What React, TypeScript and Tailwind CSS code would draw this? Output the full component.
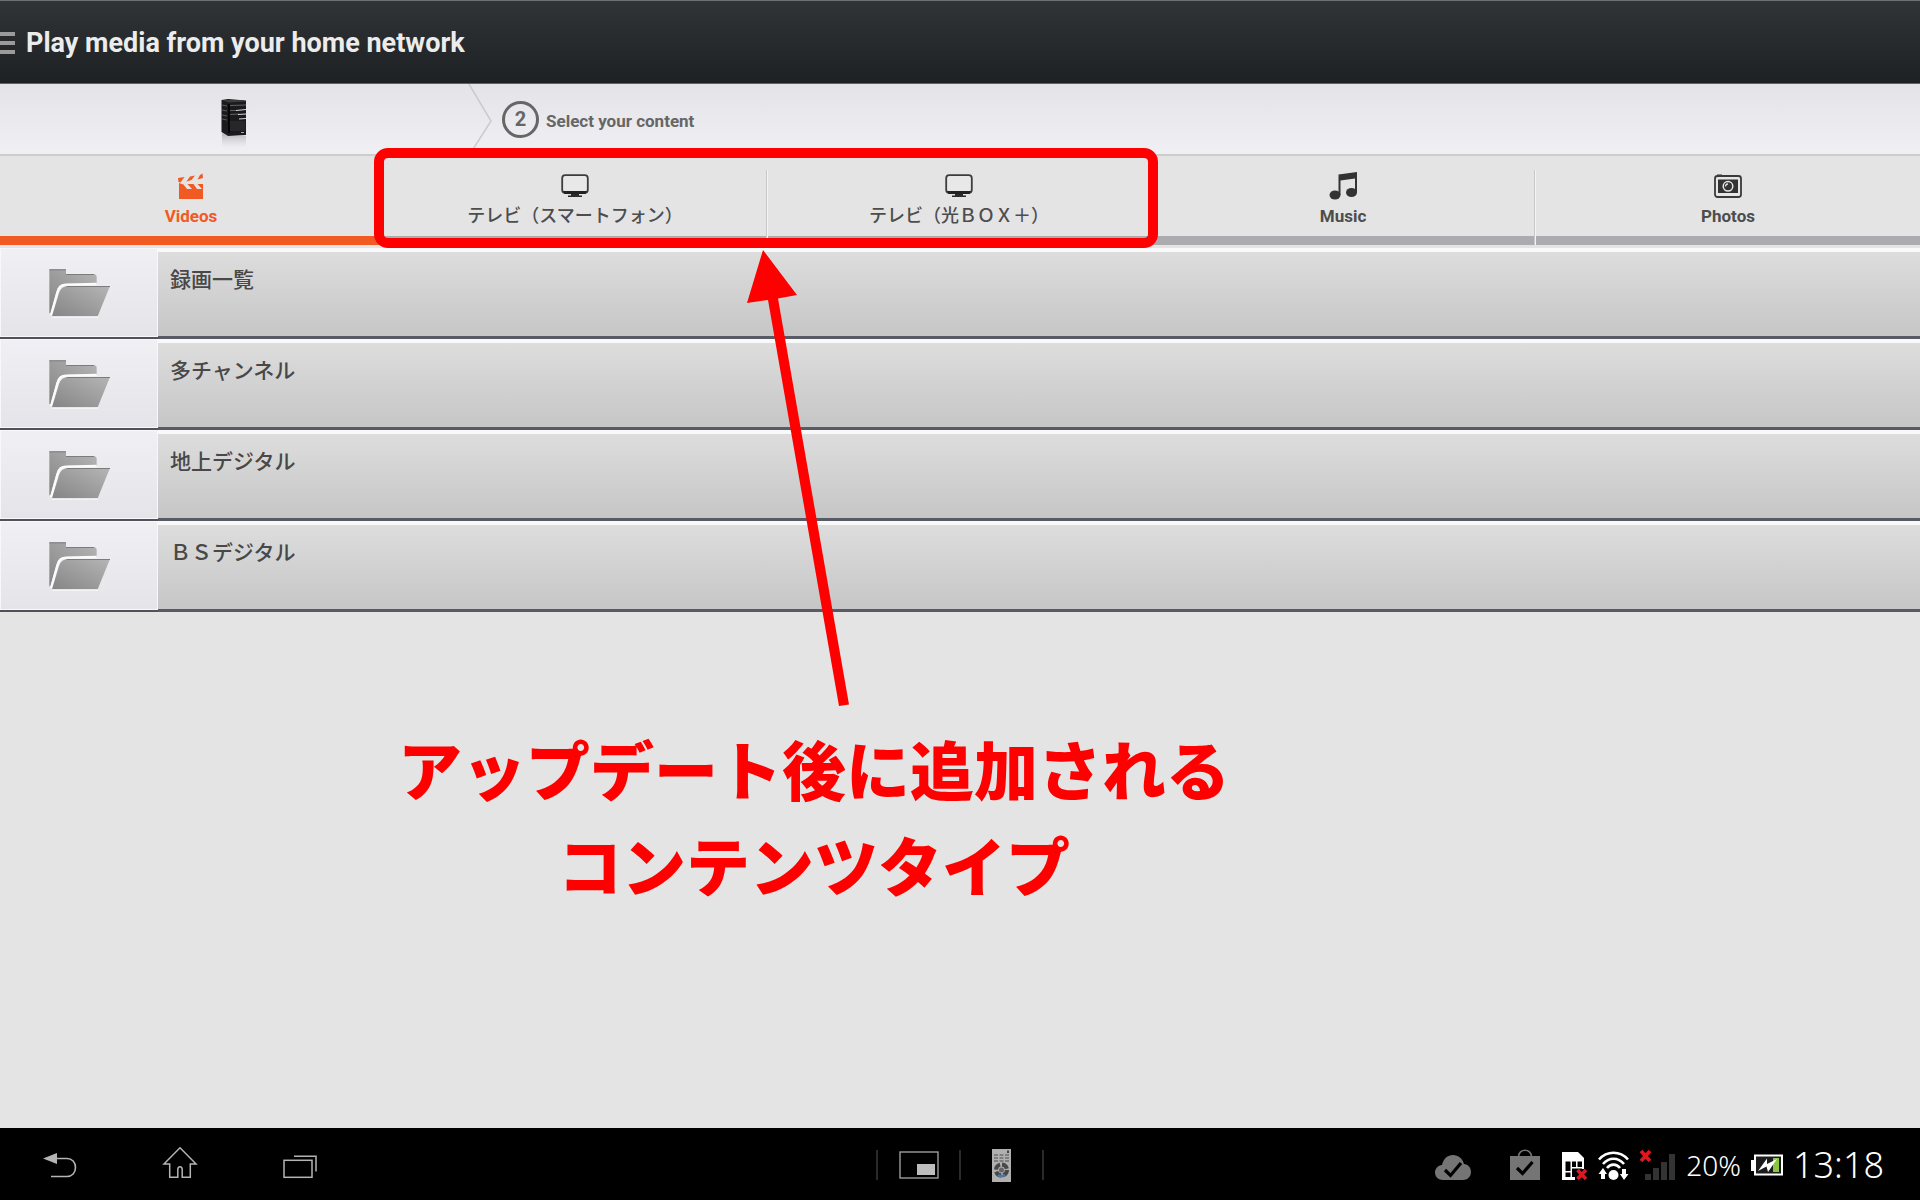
import React, { useState } from "react";

const contentTabs = [
  { id: "videos", label: "Videos", icon: <VideosIcon />, latin: true },
  { id: "tv-phone", label: "テレビ（スマートフォン）", icon: <TvIcon />, latin: false },
  { id: "tv-box", label: "テレビ（光ＢＯＸ＋）", icon: <TvIcon />, latin: false },
  { id: "music", label: "Music", icon: <MusicIcon />, latin: true },
  { id: "photos", label: "Photos", icon: <PhotosIcon />, latin: true },
];

const folders = ["録画一覧", "多チャンネル", "地上デジタル", "ＢＳデジタル"];

const App: React.FC = () => {
  return (
    <div className="relative flex min-h-screen flex-col bg-[#e4e4e4] font-['Roboto','Noto_Sans_CJK_JP',sans-serif]">
      <Header />
      <Steps />
      <ContentTabs />
      <FolderList />
      <SystemBar />
      <Callout />
    </div>
  );
};
export default App;

const Header: React.FC = () => {
  return (
    <header className="flex h-[84px] items-center gap-[11px] border-t border-b border-t-[#6b7072] border-b-[#5d6163] bg-linear-to-b from-[#303437] to-[#1d2123] pt-[2px]">
      <button aria-label="Menu" className="flex w-[15px] flex-col gap-[5px]">
        <span className="h-1 bg-[#9b9b9b]" />
        <span className="h-1 bg-[#9b9b9b]" />
        <span className="h-1 bg-[#9b9b9b]" />
      </button>
      <h1 className="text-[27px] leading-8 font-bold text-[#ececec]">
        Play media from your home network
      </h1>
    </header>
  );
};

const Steps: React.FC = () => {
  return (
    <div className="flex h-[72px] items-stretch border-b-2 border-[#cdcdd0] bg-linear-to-b from-[#e3e3e8] to-[#f0f0f4]">
      <button aria-label="Media server" className="flex w-[468px] items-center justify-center pt-[10px]">
        <ServerIcon />
      </button>
      <svg className="h-full w-[26px]" viewBox="0 0 26 70" fill="none">
        <path d="M1 0L23 37L2 70" stroke="#cbcbcf" strokeWidth="1.5" />
      </svg>
      <div className="flex items-center gap-[7px] pl-2 text-[#666]">
        <span className="flex h-[37px] w-[37px] items-center justify-center rounded-full border-[3px] border-[#666] text-xl font-bold">
          2
        </span>
        <span className="pt-[3px] text-[17px] leading-6 font-bold">Select your content</span>
      </div>
    </div>
  );
};

const ContentTabs: React.FC = () => {
  const [active, setActive] = useState<string>("videos");
  return (
    <nav className="grid grid-cols-5 pb-[3px]">
      {contentTabs.map((tab, i) => (
        <div key={tab.id} className="flex">
          <button
            onClick={() => setActive(tab.id)}
            className={`flex flex-1 flex-col items-center border-b-[9px] pt-4 pb-2 ${
              active === tab.id
                ? "border-[#f15a22] text-[#f15a22]"
                : "border-[#acacb0] text-[#4d4d4d]"
            }`}
          >
            <span className="flex h-7 items-center">{tab.icon}</span>
            <span
              className={`mt-1 leading-6 ${
                tab.latin ? "text-[17px] font-bold" : "text-lg leading-6 font-medium"
              }`}
            >
              {tab.label}
            </span>
          </button>
          {i < contentTabs.length - 1 && (
            <span className="mt-[14px] w-[2px] border-l border-[#c8c8c8] bg-[#f4f4f4]" />
          )}
        </div>
      ))}
    </nav>
  );
};

const FolderList: React.FC = () => {
  return (
    <main className="flex-1">
      <ul>
        {folders.map((name) => (
          <li key={name}>
            <button className="flex h-[91px] w-full text-left">
              <span className="h-full w-[158px] border-b-2 border-[#50525b] bg-[#f7f7fa]">
                <span className="flex h-full w-full items-center justify-center border border-[#f8f8fb] bg-linear-to-b from-[#f0f0f4] to-[#e4e4e9] pl-[2px]">
                  <FolderIcon />
                </span>
              </span>
              <span className="h-full flex-1 border-t-4 border-b-[3px] border-t-[#f9f9f9] border-b-[#585b66] bg-linear-to-b from-[#dddddd] to-[#c6c6c6] px-3 pt-3 text-[21px] leading-8 font-medium text-[#484848]">
                {name}
              </span>
            </button>
          </li>
        ))}
      </ul>
    </main>
  );
};

const SystemBar: React.FC = () => {
  return (
    <footer className="grid h-[72px] grid-cols-[1fr_auto_1fr] items-center bg-black pt-[2px] font-['Noto_Sans',sans-serif] text-white">
      <div className="flex">
        <button aria-label="Back" className="flex w-[120px] justify-center">
          <svg width="36" height="36" viewBox="0 0 36 36" fill="none">
            <path d="M14 11.5H25C30 11.5 33.5 15 33.5 20.5S30 29.5 25 29.5H9" stroke="#b4b4b4" strokeWidth="1.6" />
            <path d="M1 11.5L15 6V17Z" fill="#b4b4b4" />
          </svg>
        </button>
        <button aria-label="Home" className="flex w-[120px] justify-center">
          <svg width="36" height="36" viewBox="0 0 36 36" fill="none">
            <path
              d="M18 0.8L34 17H28.3V30.3H20.2V22.5C20.2 18.8 15.8 18.8 15.8 22.5V30.3H7.7V17H2Z"
              stroke="#b4b4b4"
              strokeWidth="1.5"
            />
          </svg>
        </button>
        <button aria-label="Recent apps" className="flex w-[120px] justify-center">
          <svg width="36" height="36" viewBox="0 0 36 36" fill="none" stroke="#b4b4b4" strokeWidth="1.5">
            <rect x="2" y="13.3" width="28" height="17" />
            <path d="M12 9.2H34V24.5" />
          </svg>
        </button>
      </div>

      <div className="flex items-center">
        <span className="h-[30px] w-[2px] bg-[#2a2a2a]" />
        <button aria-label="Small apps" className="flex w-[81px] justify-center">
          <svg width="40" height="28" viewBox="0 0 40 28">
            <rect x="1" y="1" width="38" height="26" fill="none" stroke="#a8a8a8" strokeWidth="1.3" />
            <rect x="18" y="13" width="18" height="11" fill="#bdbdbd" />
          </svg>
        </button>
        <span className="h-[30px] w-[2px] bg-[#2a2a2a]" />
        <button aria-label="Remote" className="flex w-[81px] justify-center">
          <RemoteIcon />
        </button>
        <span className="h-[30px] w-[2px] bg-[#2a2a2a]" />
      </div>

      <div className="flex items-center justify-end gap-[10px] pr-9">
        <div className="mr-3 flex items-center gap-[39px]">
          <svg width="36" height="32" viewBox="0 0 36 32">
            <path
              d="M8 31C3.5 31 0 28 0 23.5C0 19.5 3 16.5 7 16C8.5 9.5 12.5 6 18 6C23.5 6 27.5 9.5 29 15C33 15.5 36 18.5 36 23C36 27.5 32.5 31 28 31Z"
              fill="#757575"
            />
            <path d="M10 21L15.5 26.5L26 14" fill="none" stroke="#000" strokeWidth="3.2" />
          </svg>
          <svg width="30" height="32" viewBox="0 0 30 32">
            <path d="M8.5 8C8.5 -1 21.5 -1 21.5 8" fill="none" stroke="#757575" strokeWidth="1.6" />
            <rect y="7" width="30" height="24" fill="#757575" />
            <path d="M7 19L12.5 24.5L22.5 13" fill="none" stroke="#000" strokeWidth="3.2" />
          </svg>
        </div>
        <svg width="26" height="32" viewBox="0 0 26 32">
          <path d="M0 3H16L22 9V31H0Z" fill="#fff" />
          <path
            d="M3.5 12.5H8.5V22H3.5ZM10 12.5H14V18H10ZM15.5 12.5H20V18H15.5ZM10 19.5H20V28H10ZM3.5 23.5H8.5V28H3.5Z"
            fill="#000"
          />
          <path d="M13 20H23V31H13Z" fill="#000" />
          <path d="M15.5 21L24 30M24 21L15.5 30" stroke="#e3171b" strokeWidth="3.6" />
        </svg>
        <svg width="31" height="32" viewBox="0 0 31 32">
          <g fill="none" stroke="#fff" strokeWidth="2.6">
            <path d="M1 10.5C9 1.5 22 1.5 30 10.5" />
            <path d="M5 15C11 8 20 8 26 15" />
            <path d="M9 19C12.5 14.5 18.5 14.5 22 19" />
          </g>
          <circle cx="15.5" cy="26" r="5" fill="#fff" />
          <path d="M5 19L9 25H7V30H3V25H0.5ZM26 31L22 25H24V20H28V25H30.5Z" fill="#fff" />
        </svg>
        <svg width="37" height="32" viewBox="0 0 37 32">
          <path d="M2 2L11 12M11 2L2 12" stroke="#e3171b" strokeWidth="3.6" />
          <path d="M6 25H12V31H6ZM14 19H20V31H14ZM22 13H28V31H22ZM30 5H36V31H30Z" fill="#333" />
        </svg>
        <span className="text-[28px] leading-9 font-light">20%</span>
        <svg width="32" height="22" viewBox="0 0 32 22">
          <rect x="4" y="1.5" width="27" height="19" fill="#1c1c1c" stroke="#fff" strokeWidth="2" />
          <rect y="6" width="4" height="11" fill="#fff" />
          <rect x="22" y="4" width="6" height="14" fill="#8cc63f" />
          <path d="M7 17L16 4.5V10L26 5L17 18L15.5 12.5Z" fill="#fff" />
        </svg>
        <time className="text-4xl font-light">13:18</time>
      </div>
    </footer>
  );
};

// red marker drawn over the two TV tabs
const Callout: React.FC = () => {
  return (
    <div className="pointer-events-none absolute inset-0 text-[#ff0000]">
      <div className="absolute top-[148px] left-[374px] h-[100px] w-[784px] rounded-[14px] border-[10px] border-current" />
      <svg className="absolute top-[250px] left-[746px] h-[458px] w-[104px]" viewBox="0 0 104 458">
        <path d="M17 0L51 45L32 48.5L103 454.5L93 456L22 50L1 53Z" fill="currentColor" />
      </svg>
      <p className="absolute top-[726px] left-[398px] text-center text-[64px] leading-24 font-black whitespace-nowrap">
        アップデート後に追加される
        <br />
        コンテンツタイプ
      </p>
    </div>
  );
};

function ServerIcon() {
  return (
    <svg width="26" height="50" viewBox="0 0 26 50">
      <defs>
        <linearGradient id="reflection" x1="0" y1="0" x2="0" y2="1">
          <stop offset="0" stopColor="#8c8c90" stopOpacity="0.6" />
          <stop offset="1" stopColor="#c8c8cc" stopOpacity="0" />
        </linearGradient>
      </defs>
      <path d="M1 34L7 37H25V49H1Z" fill="url(#reflection)" />
      <path d="M0.5 1L7 0L25 1.5V36L7 37L0.5 33Z" fill="#1b1b1d" />
      <path d="M0.5 1L20 1L25 2.5L8 3.5Z" fill="#3a3b3e" />
      <path d="M8 5V34" stroke="#000" strokeWidth="1.5" />
      <path d="M1 6L6 7M1 11L6 12M1 16L6 17M1 20L6 21" stroke="#6a6b70" strokeWidth="0.8" />
      <path d="M9 6.5L25 6M9 11.5H16M9 15.5L18 15" stroke="#6a6b6f" strokeWidth="0.9" />
      <path d="M15 11.5L25 10.5M18 20L25 19.5M17 15.5L25 15" stroke="#d5d5d8" strokeWidth="1" />
      <path d="M9 22H24V32H9Z" fill="#26272a" />
      <path d="M20 33.5H23" stroke="#ccc" strokeWidth="0.8" />
    </svg>
  );
}

function VideosIcon() {
  return (
    <svg width="26" height="27" viewBox="0 0 26 27" fill="#f15a22">
      <path d="M1 26V10L5.5 11.5L9 16H14L9.5 11H15.5L19 16H24L19.5 11H25V26Z" />
      <path d="M0 5L6.5 4L2.5 9.5L0.5 9ZM12 3.5L17 2.5L13.5 7L8.5 8.5ZM22 2L24.5 0.5L25 5L19.5 6.5Z" />
    </svg>
  );
}

function TvIcon() {
  return (
    <svg width="28" height="24" viewBox="0 0 28 24">
      <rect x="1.2" y="1.2" width="25.6" height="17.6" rx="3" fill="#e8e8e8" stroke="#3d3d3d" strokeWidth="1.8" />
      <path d="M2 17H26L24.5 20H3.5Z" fill="#222" />
      <path d="M10 20H18V21.5H21V23H7V21.5H10Z" fill="#2b2b2b" />
    </svg>
  );
}

function MusicIcon() {
  return (
    <svg width="28" height="28" viewBox="0 0 28 28" fill="#333">
      <path d="M9.5 2.5L28 0V20.5H26V6.5L11.5 8.5V23H9.5Z" />
      <ellipse cx="6" cy="23" rx="5.5" ry="4.5" />
      <ellipse cx="22.5" cy="20.5" rx="5.5" ry="4.5" />
    </svg>
  );
}

function PhotosIcon() {
  return (
    <svg width="28" height="24" viewBox="0 0 28 24">
      <path d="M3 2.5V0.5H8V2.5Z" fill="#333" />
      <rect x="1" y="2" width="26" height="21" rx="2.5" fill="#e6e6e6" stroke="#3a3a3a" strokeWidth="1.8" />
      <rect x="4" y="5.5" width="20" height="13.5" fill="#333" />
      <circle cx="14" cy="12.3" r="4.8" fill="#333" stroke="#e6e6e6" strokeWidth="1.5" />
      <path d="M11.5 12.5C11.5 11 12.5 10 14 9.8" fill="none" stroke="#e6e6e6" strokeWidth="1.2" />
    </svg>
  );
}

function FolderIcon() {
  return (
    <svg width="62" height="50" viewBox="147 113 186 150">
      <defs>
        <linearGradient id="folder" x1="0" y1="1" x2="1" y2="0">
          <stop offset="0" stopColor="#858585" />
          <stop offset="1" stopColor="#b5b5b5" />
        </linearGradient>
      </defs>
      <path
        d="M148 117H198V131H280Q290 131 290 140V160H195Q175 160 169 185L152 249H148Z"
        fill="url(#folder)"
      />
      <path d="M148 118.5H198M198 132.5H282" stroke="#7c7c7c" strokeWidth="3" />
      <path
        d="M153 254L173 184Q178 163 200 163L290 161"
        fill="none"
        stroke="#fbfbfb"
        strokeWidth="7"
      />
      <path d="M205 167H330L293 258H156L177 188Q184 167 205 167Z" fill="url(#folder)" />
      <path d="M200 168.5H330" stroke="#7c7c7c" strokeWidth="3" />
      <path d="M156 260H294" stroke="#fff" strokeWidth="3" />
    </svg>
  );
}

function RemoteIcon() {
  return (
    <svg width="19" height="33" viewBox="0 0 19 33">
      <rect width="19" height="33" fill="#b0b0b0" />
      <rect x="15" y="1.5" width="2" height="2.5" fill="#444" />
      <path
        d="M2 6H6M7.5 6H11.5M13 6H17M2 9H6M7.5 9H11.5M13 9H17M2 12H6M7.5 12H11.5M13 12H17"
        stroke="#4d4d4d"
        strokeWidth="1.2"
      />
      <circle cx="9.5" cy="21" r="5.5" fill="none" stroke="#484848" strokeWidth="4" strokeDasharray="6.6 2" />
      <path d="M6 26Q9.5 28.5 13 26" fill="none" stroke="#4a78a8" strokeWidth="2.5" />
      <circle cx="9.5" cy="21" r="2.5" fill="#666" />
    </svg>
  );
}
